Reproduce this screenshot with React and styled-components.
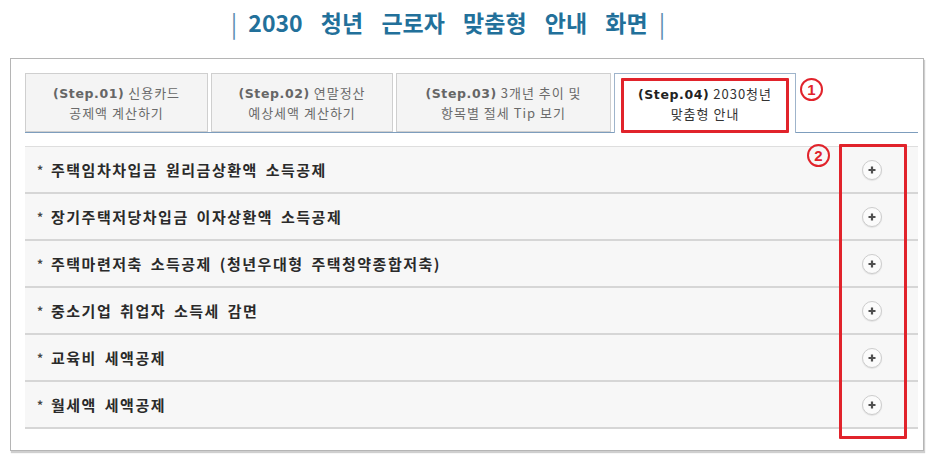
import React from 'react';
import styled, { createGlobalStyle } from 'styled-components';

const GlobalStyle = createGlobalStyle`
  html, body {
    margin: 0;
    padding: 0;
    background: #ffffff;
  }
  body {
    font-family: "Noto Sans CJK KR", "Noto Sans", sans-serif;
  }
`;

const tabs = [
  { step: '(Step.01)', first: '신용카드', second: '공제액 계산하기', width: 183 },
  { step: '(Step.02)', first: '연말정산', second: '예상세액 계산하기', width: 182 },
  { step: '(Step.03)', first: '3개년 추이 및', second: '항목별 절세 Tip 보기', width: 215 },
  { step: '(Step.04)', first: '2030청년', second: '맞춤형 안내', width: 182, active: true },
];

const items = [
  '주택임차차입금 원리금상환액 소득공제',
  '장기주택저당차입금 이자상환액 소득공제',
  '주택마련저축 소득공제 (청년우대형 주택청약종합저축)',
  '중소기업 취업자 소득세 감면',
  '교육비 세액공제',
  '월세액 세액공제',
];

export default function App() {
  return (
    <Page>
      <GlobalStyle />
      <Title>
        <Bar>|</Bar>
        <span>2030 청년 근로자 맞춤형 안내 화면</span>
        <Bar>|</Bar>
      </Title>
      <Panel>
        <TabRow>
          {tabs.map((tab) => (
            <Tab key={tab.step} $width={tab.width} $active={tab.active}>
              <TabLine>
                <b>{tab.step}</b> {tab.first}
              </TabLine>
              <TabLine>{tab.second}</TabLine>
              {tab.active && <TabMark />}
            </Tab>
          ))}
          <Callout $left={775} $top={5}>1</Callout>
        </TabRow>
        <List>
          {items.map((item) => (
            <Row key={item}>
              <RowText>
                <Bullet>*</Bullet>
                {item}
              </RowText>
              <PlusButton>
                <svg width="10" height="10" viewBox="0 0 10 10">
                  <path d="M5 1.5v7M1.5 5h7" stroke="#4f4f4f" strokeWidth="2.2" />
                </svg>
              </PlusButton>
            </Row>
          ))}
          <ColumnMark />
          <Callout $left={782} $top={-3}>2</Callout>
        </List>
      </Panel>
    </Page>
  );
}

const Page = styled.div`
  width: 932px;
  height: 463px;
  overflow: hidden;
`;

const Title = styled.h1`
  margin: 0;
  height: 44px;
  padding-right: 36px;
  display: flex;
  align-items: center;
  justify-content: center;
  gap: 11px;
  font-size: 23px;
  font-weight: 700;
  word-spacing: 13px;
  color: #22709a;
  white-space: pre;
`;

const Bar = styled.span`
  font-weight: 400;
  font-size: 24px;
  color: #5b90b2;
`;

const Panel = styled.div`
  margin: 14px 0 0 10px;
  width: 898px;
  height: 377px;
  padding: 14px 0 0 14px;
  border: 1px solid #b5b5b5;
  box-shadow: 1px 2px 1px #cfcfcf;
`;

const TabRow = styled.div`
  position: relative;
  display: flex;
  gap: 3px;
  width: 893px;
  height: 59px;
  border-bottom: 1px solid #7d9dbd;
`;

const Tab = styled.div`
  position: relative;
  box-sizing: border-box;
  width: ${(p) => p.$width}px;
  height: ${(p) => (p.$active ? 60 : 59)}px;
  display: flex;
  flex-direction: column;
  align-items: center;
  justify-content: center;
  border: 1px solid ${(p) => (p.$active ? '#9fb4cb' : '#cfcfcf')};
  border-bottom: ${(p) => (p.$active ? 'none' : '1px solid #cfcfcf')};
  background: ${(p) => (p.$active ? '#ffffff' : '#f4f4f4')};
  color: ${(p) => (p.$active ? '#333333' : '#6a6a6a')};
  font-size: 13px;
  letter-spacing: 1px;
  line-height: 19px;
  z-index: ${(p) => (p.$active ? 1 : 0)};

  b {
    font-family: "DejaVu Sans", "Noto Sans CJK KR", sans-serif;
    font-size: 12.5px;
    font-weight: 700;
    letter-spacing: 0.6px;
    color: ${(p) => (p.$active ? '#222222' : '#666666')};
  }
`;

const TabLine = styled.div`
  white-space: nowrap;
`;

const TabMark = styled.div`
  position: absolute;
  left: 6px;
  top: 4px;
  width: 168px;
  height: 55px;
  box-sizing: border-box;
  border: 3px solid #e1232b;
  border-radius: 1px;
`;

const Callout = styled.div`
  position: absolute;
  left: ${(p) => p.$left}px;
  top: ${(p) => p.$top}px;
  width: 23px;
  height: 23px;
  box-sizing: border-box;
  border: 2.5px solid #e1232b;
  border-radius: 50%;
  display: flex;
  align-items: center;
  justify-content: center;
  font-family: "Liberation Sans", sans-serif;
  font-size: 15px;
  font-weight: 700;
  color: #e1232b;
`;

const List = styled.div`
  position: relative;
  margin-top: 13px;
  width: 893px;
  border-top: 1px solid #dedede;
`;

const Row = styled.div`
  display: flex;
  align-items: center;
  justify-content: space-between;
  height: 45px;
  padding: 0 36px 0 12px;
  background: #f7f7f7;
  border-bottom: 2px solid #d6d6d6;
`;

const RowText = styled.span`
  display: flex;
  align-items: center;
  font-size: 15px;
  font-weight: 700;
  letter-spacing: 1.5px;
  word-spacing: 3px;
  color: #2a2a2a;
  white-space: pre;
`;

const Bullet = styled.span`
  width: 14px;
  font-size: 12px;
  color: #444444;
`;

const PlusButton = styled.span`
  width: 20px;
  height: 20px;
  box-sizing: border-box;
  border-radius: 50%;
  border: 1px solid #cdcdcd;
  background: #fbfbfb;
  box-shadow: 0 1px 1px #e2e2e2;
  display: flex;
  align-items: center;
  justify-content: center;
`;

const ColumnMark = styled.div`
  position: absolute;
  left: 814px;
  top: -3px;
  width: 68px;
  height: 295px;
  box-sizing: border-box;
  border: 3px solid #e1232b;
  border-radius: 1px;
`;
